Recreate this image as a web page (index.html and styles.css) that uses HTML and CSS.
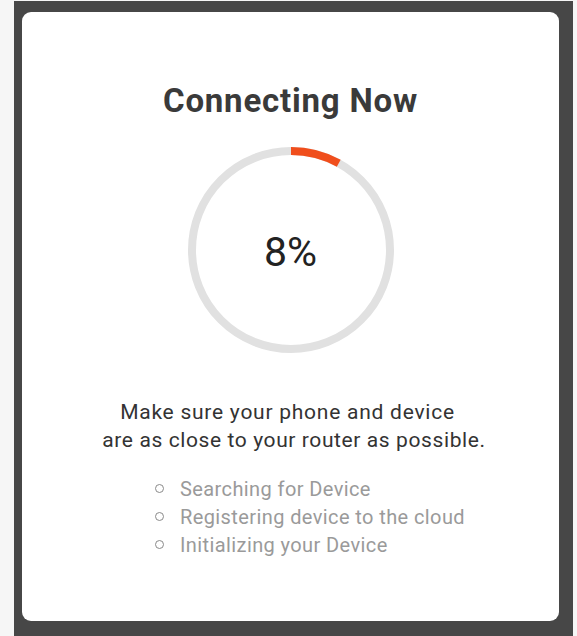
FILE: index.html
```html
<!DOCTYPE html>
<html>
<head>
<meta charset="utf-8">
<link rel="stylesheet" href="styles.css">
</head>
<body>
<div class="frame">
  <div class="card">
    <h1 class="title">Connecting Now</h1>
    <div class="ring">
      <svg width="210" height="210" viewBox="0 0 210 210">
        <circle cx="105" cy="105" r="99" fill="none" stroke="#e1e1e1" stroke-width="8"/>
        <circle cx="105" cy="105" r="99" fill="none" stroke="#f04e1c" stroke-width="8" stroke-dasharray="49.8 700" transform="rotate(-90 105 105)"/>
      </svg>
      <span class="pct">8%</span>
    </div>
    <p class="hint"><span class="line line-first">Make sure your phone and device</span><span class="line line-second">are as close to your router as possible.</span></p>
    <ul class="steps">
      <li class="step"><span class="dot"></span>Searching for Device</li>
      <li class="step"><span class="dot"></span>Registering device to the cloud</li>
      <li class="step"><span class="dot"></span>Initializing your Device</li>
    </ul>
  </div>
</div>
</body>
</html>
```
FILE: styles.css
```css
html, body {
  margin: 0;
  padding: 0;
  background: #f6f6f6;
  font-family: Roboto, "Noto Sans", sans-serif;
}
.frame {
  box-sizing: border-box;
  margin: 1px 4px 0 14px;
  height: 635px;
  background: #474747;
  padding: 11px 14px 15px 8px;
}
.card {
  box-sizing: border-box;
  height: 609px;
  background: #ffffff;
  border-radius: 9px;
  display: flex;
  flex-direction: column;
  align-items: center;
  padding-top: 71px;
}
.title {
  margin: 0;
  font-size: 33px;
  line-height: 36px;
  font-weight: 700;
  letter-spacing: 0.8px;
  color: #3a3a3a;
}
.ring {
  position: relative;
  width: 210px;
  height: 210px;
  margin-top: 26px;
}
.ring svg {
  display: block;
}
.pct {
  position: absolute;
  left: 0;
  right: 0;
  top: 0;
  bottom: 0;
  display: flex;
  align-items: center;
  justify-content: center;
  font-size: 41px;
  color: #222;
  padding-top: 4px;
}
.hint {
  margin: 43px 0 0;
  text-align: center;
  font-size: 21px;
  line-height: 28px;
  letter-spacing: 0.6px;
  color: #333;
}
.line {
  display: block;
}
.line-first {
  letter-spacing: 0.75px;
  padding-right: 6px;
}
.line-second {
  padding-left: 7px;
}
.steps {
  list-style: none;
  margin: 21px 0 0 133px;
  padding: 0;
  align-self: flex-start;
}
.step {
  display: flex;
  align-items: center;
  font-size: 20px;
  line-height: 28px;
  letter-spacing: 0.4px;
  color: #9a9a9a;
}
.dot {
  box-sizing: border-box;
  width: 9px;
  height: 9px;
  border: 1.6px solid #8a8a8a;
  border-radius: 50%;
  margin-right: 16px;
  margin-top: -2px;
}
```
